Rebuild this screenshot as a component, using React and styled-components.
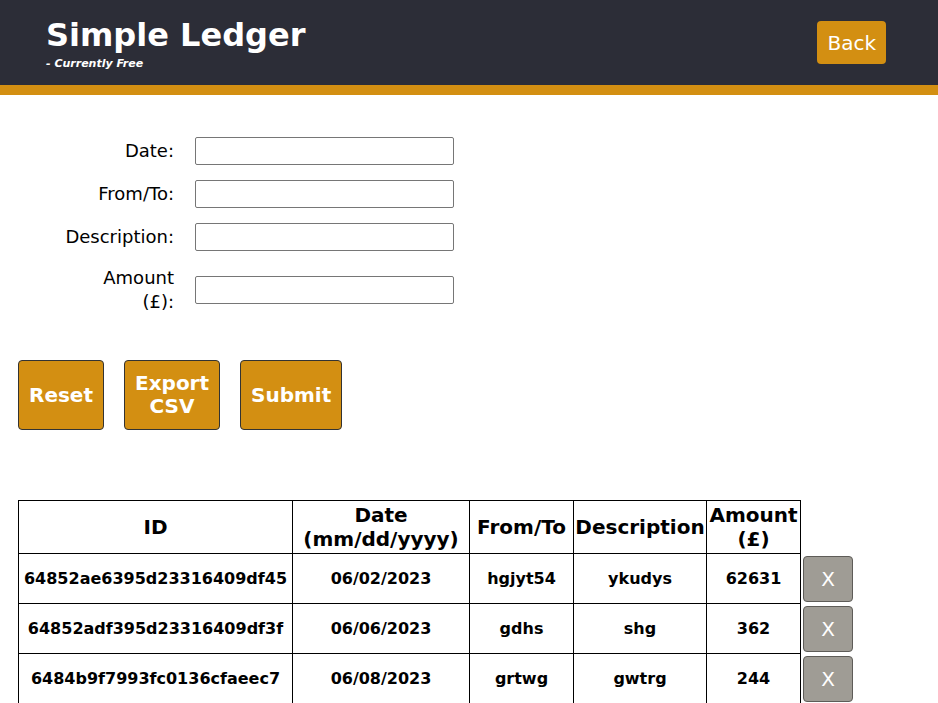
import React from 'react';
import styled, { createGlobalStyle } from 'styled-components';

const GlobalStyle = createGlobalStyle`
  body {
    margin: 0;
    font-family: 'DejaVu Sans', Verdana, sans-serif;
    background-color: #fff;
    color: #000;
  }
`;

const StyledHeader = styled.header`
  height: 85px;
  display: flex;
  align-items: center;
  justify-content: space-between;
  padding: 0 52px 0 46px;
  background-color: #2c2d37;
  border-bottom: 10px solid #d38f12;
`;

const StyledTitle = styled.h1`
  margin: 0;
  font-size: 32px;
  line-height: 38px;
  font-weight: 700;
  color: #fff;
`;

const StyledSubtitle = styled.p`
  margin: 3px 0 0;
  font-size: 11px;
  line-height: 13px;
  font-weight: 700;
  font-style: italic;
  color: #fff;
`;

const StyledBackButton = styled.button`
  height: 43px;
  padding: 0 10px;
  font-family: inherit;
  font-size: 20px;
  color: #fff;
  background-color: #d38f12;
  border: none;
  border-radius: 4px;
  cursor: pointer;
`;

const StyledMain = styled.main`
  padding: 42px 18px 0;
`;

const StyledForm = styled.form`
  display: flex;
  flex-direction: column;
  gap: 15px;
  padding-left: 41px;
`;

const StyledRow = styled.div`
  display: flex;
  align-items: center;
  gap: 21px;
`;

const StyledLabel = styled.label`
  width: 115px;
  text-align: right;
  font-size: 18px;
  line-height: 24px;
`;

const StyledInput = styled.input`
  width: 259px;
  height: 28px;
  box-sizing: border-box;
  border: 1px solid #767676;
  border-radius: 2px;
  padding: 2px 4px;
  font-family: inherit;
`;

const StyledButtons = styled.div`
  display: flex;
  gap: 20px;
  margin-top: 46px;
`;

const StyledActionButton = styled.button`
  width: min-content;
  height: 70px;
  padding: 0 10px;
  font-family: inherit;
  font-size: 20px;
  line-height: 23px;
  font-weight: 700;
  color: #fff;
  background-color: #d38f12;
  border: 1px solid #333;
  border-radius: 4px;
  cursor: pointer;
`;

const StyledTable = styled.table`
  margin-top: 70px;
  width: 836px;
  table-layout: fixed;
  border-collapse: collapse;
`;

const StyledTh = styled.th`
  border: 1px solid #000;
  padding: 2px 0;
  font-size: 20px;
  line-height: 24px;
  font-weight: 700;
  text-align: center;
  height: 48px;
`;

const StyledTd = styled.td`
  border: 1px solid #000;
  padding: 0;
  font-size: 16px;
  font-weight: 700;
  text-align: center;
`;

const StyledActionCell = styled.td`
  padding: 2px 0 2px 2px;
  border: none;
`;

const StyledDeleteButton = styled.button`
  display: block;
  width: 50px;
  height: 46px;
  font-family: inherit;
  font-size: 20px;
  color: #fff;
  background-color: #9f9c95;
  border: 1px solid #5e5c58;
  border-radius: 4px;
  cursor: pointer;
`;

const entries = [
  { id: '64852ae6395d23316409df45', date: '06/02/2023', party: 'hgjyt54', description: 'ykudys', amount: 62631 },
  { id: '64852adf395d23316409df3f', date: '06/06/2023', party: 'gdhs', description: 'shg', amount: 362 },
  { id: '6484b9f7993fc0136cfaeec7', date: '06/08/2023', party: 'grtwg', description: 'gwtrg', amount: 244 },
];

const App = () => (
  <>
    <GlobalStyle />
    <StyledHeader>
      <div>
        <StyledTitle>Simple Ledger</StyledTitle>
        <StyledSubtitle>- Currently Free</StyledSubtitle>
      </div>
      <StyledBackButton>Back</StyledBackButton>
    </StyledHeader>
    <StyledMain>
      <StyledForm onSubmit={(e) => e.preventDefault()}>
        <StyledRow>
          <StyledLabel htmlFor='date'>Date:</StyledLabel>
          <StyledInput id='date' />
        </StyledRow>
        <StyledRow>
          <StyledLabel htmlFor='party'>From/To:</StyledLabel>
          <StyledInput id='party' />
        </StyledRow>
        <StyledRow>
          <StyledLabel htmlFor='description'>Description:</StyledLabel>
          <StyledInput id='description' />
        </StyledRow>
        <StyledRow>
          <StyledLabel htmlFor='amount'>
            Amount
            <br />
            (£):
          </StyledLabel>
          <StyledInput id='amount' />
        </StyledRow>
      </StyledForm>
      <StyledButtons>
        <StyledActionButton>Reset</StyledActionButton>
        <StyledActionButton>Export CSV</StyledActionButton>
        <StyledActionButton>Submit</StyledActionButton>
      </StyledButtons>
      <StyledTable>
        <colgroup>
          <col style={{ width: 274 }} />
          <col style={{ width: 177 }} />
          <col style={{ width: 104 }} />
          <col style={{ width: 133 }} />
          <col style={{ width: 94 }} />
          <col style={{ width: 54 }} />
        </colgroup>
        <thead>
          <tr>
            <StyledTh>ID</StyledTh>
            <StyledTh>Date (mm/dd/yyyy)</StyledTh>
            <StyledTh>From/To</StyledTh>
            <StyledTh>Description</StyledTh>
            <StyledTh>Amount (£)</StyledTh>
            <StyledActionCell as='th' />
          </tr>
        </thead>
        <tbody>
          {entries.map((entry) => (
            <tr key={entry.id}>
              <StyledTd>{entry.id}</StyledTd>
              <StyledTd>{entry.date}</StyledTd>
              <StyledTd>{entry.party}</StyledTd>
              <StyledTd>{entry.description}</StyledTd>
              <StyledTd>{entry.amount}</StyledTd>
              <StyledActionCell>
                <StyledDeleteButton>X</StyledDeleteButton>
              </StyledActionCell>
            </tr>
          ))}
        </tbody>
      </StyledTable>
    </StyledMain>
  </>
);

export default App;
